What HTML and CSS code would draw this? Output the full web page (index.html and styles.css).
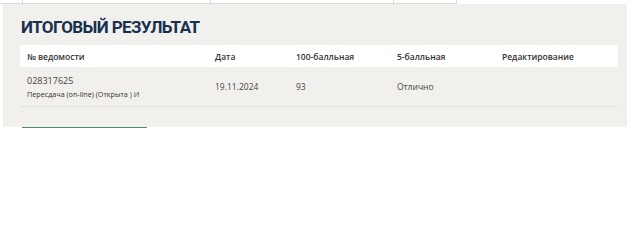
FILE: index.html
```html
<!DOCTYPE html>
<html lang="ru">

<head>
    <meta charset="UTF-8">
    <meta name="viewport" content="width=device-width, initial-scale=1.0">
    <title>Итоговый результат</title>
    <link rel="stylesheet" href="styles.css">
</head>

<body>
    <!-- bottom edge of the table above -->
    <div class="top-strip">
        <div class="strip-cell cell-a"></div>
        <div class="strip-cell cell-b"></div>
        <div class="strip-cell cell-c"></div>
        <div class="strip-cell cell-d"></div>
    </div>

    <div class="panel">
        <h2 class="panel-title">Итоговый результат</h2>
        <table class="results">
            <thead>
                <tr>
                    <th class="col-num">№ ведомости</th>
                    <th class="col-date">Дата</th>
                    <th class="col-100">100-балльная</th>
                    <th class="col-5">5-балльная</th>
                    <th>Редактирование</th>
                </tr>
            </thead>
            <tbody>
                <tr>
                    <td>
                        <div class="sheet-no">028317625</div>
                        <div class="sheet-type">Пересдача (on-line) (Открыта ) И</div>
                    </td>
                    <td>19.11.2024</td>
                    <td>93</td>
                    <td>Отлично</td>
                    <td></td>
                </tr>
            </tbody>
        </table>
    </div>

    <div class="btn-edge"></div>
</body>

</html>
```

FILE: styles.css
```css
body {
    margin: 0;
    font-family: "Open Sans", "Noto Sans", Arial, sans-serif;
    background-color: white;
    color: #333;
}

.top-strip {
    display: flex;
    height: 4px;
}

.strip-cell {
    height: 3px;
    border-bottom: 1px solid #d9d9d6;
    border-right: 1px solid #d9d9d6;
}

.cell-a { width: 22px; }
.cell-b { width: 187px; }
.cell-c { width: 182px; }
.cell-d { width: 62px; }

.panel {
    background-color: #f1f0ed;
    margin-left: 3px;
    width: 624px;
    padding: 10px 9px 20px 17px;
    box-sizing: border-box;
}

.panel-title {
    margin: 0 0 5px 1px;
    font-family: Roboto, "Open Sans", sans-serif;
    font-size: 17px;
    font-weight: 700;
    text-transform: uppercase;
    color: #17304f;
    line-height: 26px;
    letter-spacing: -0.6px;
}

.results {
    width: 598px;
    border-collapse: collapse;
    font-size: 8.5px;
}

.results th {
    background-color: white;
    text-align: left;
    font-weight: 600;
    height: 22px;
    padding: 0 0 0 7px;
    color: #333;
}

.results td {
    height: 39px;
    padding: 0 0 0 7px;
    border-bottom: 1px solid #e2e1de;
    color: #444;
}

.col-num { width: 181px; }
.col-date { width: 74px; }
.col-100 { width: 94px; }
.col-5 { width: 98px; }

.sheet-no {
    font-size: 9px;
}

.sheet-type {
    font-size: 7.2px;
    margin-top: 2px;
    color: #333;
}

.btn-edge {
    margin-left: 22px;
    width: 125px;
    height: 1px;
    background-color: #4f8c6c;
}
```
